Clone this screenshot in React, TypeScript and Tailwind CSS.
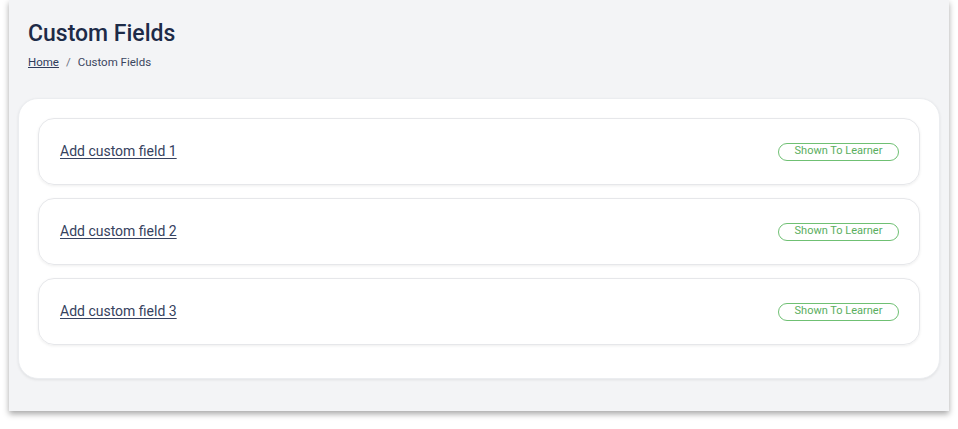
const fields = ['Add custom field 1', 'Add custom field 2', 'Add custom field 3']

const App = () => {
  return (
    <div className="min-h-[429px] bg-white px-[9px] pb-[18px]" style={{ fontFamily: 'Roboto, "Noto Sans", sans-serif' }}>
      <div className="bg-[#f3f4f6] shadow-[0_3px_6px_rgba(0,0,0,0.35)] px-[9px] pt-[20px] pb-[32px]">
        <div className="px-[10px]">
          <h1 className="text-[23px] leading-[27px] font-medium text-[#1d2b48]">Custom Fields</h1>
          <div className="mt-[8px] flex items-center text-[11.5px] leading-[14px] text-[#3b4660]">
            <a href="#" className="underline text-[#2f3c5c]">Home</a>
            <span className="mx-[7px] text-[#6b7280]">/</span>
            <span>Custom Fields</span>
          </div>
        </div>
        <div className="mt-[29px] bg-white rounded-[20px] border border-[#ebedf0] shadow-[0_1px_3px_rgba(0,0,0,0.08)] px-[19px] pt-[19px] pb-[20px]">
          {fields.map((f) => (
            <div
              key={f}
              className="mb-[13px] h-[67px] flex items-center justify-between rounded-[16px] border border-[#e6e7ea] shadow-[0_1px_3px_rgba(0,0,0,0.07)] pl-[21px] pr-[20px]"
            >
              <a href="#" className="text-[14px] text-[#364260] underline underline-offset-2">{f}</a>
              <span className="w-[121px] h-[18px] flex items-center justify-center rounded-full border border-[#6fc073] text-[11px] text-[#5aae5e]">
                Shown To Learner
              </span>
            </div>
          ))}
        </div>
      </div>
    </div>
  )
}

export default App
